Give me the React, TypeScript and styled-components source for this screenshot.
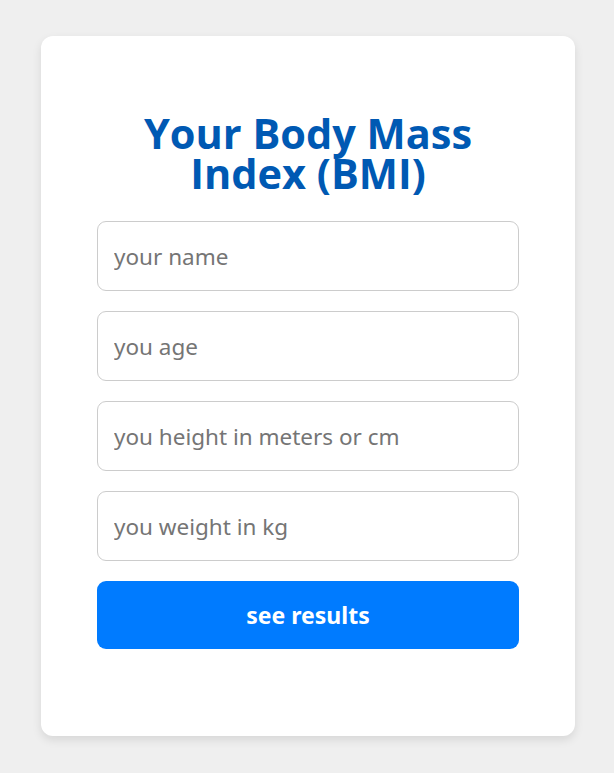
import React from "react";
import styled, { createGlobalStyle } from "styled-components";

const Global = createGlobalStyle`
  html, body { margin: 0; padding: 0; background: #efefef; }
  body { font-family: "Open Sans", "Noto Sans", sans-serif; }
  * { box-sizing: border-box; }
`;

const Page = styled.div`
  min-height: 773px;
  display: flex;
  justify-content: center;
  padding: 36px 0 0 2px;
`;

const Card = styled.div`
  width: 534px;
  height: 700px;
  background: #fff;
  border-radius: 12px;
  box-shadow: 0 4px 10px rgba(0, 0, 0, 0.1);
  padding: 77px 56px 0;
  display: flex;
  flex-direction: column;
`;

const Title = styled.h1`
  margin: 0 0 28px;
  text-align: center;
  color: #0059b3;
  font-family: "Open Sans", sans-serif;
  font-weight: 700;
  font-size: 41.5px;
  line-height: 40px;
`;

const Form = styled.form`
  display: flex;
  flex-direction: column;
  gap: 20px;
`;

const Input = styled.input`
  width: 100%;
  height: 70px;
  border: 1px solid #cccccc;
  border-radius: 9px;
  padding: 0 16px;
  font-family: "Noto Sans", sans-serif;
  font-size: 22.5px;
  color: #333;
  background: #fff;
  outline: none;
  &::placeholder { color: #757575; }
`;

const Button = styled.button`
  height: 68px;
  flex-shrink: 0;
  border: none;
  border-radius: 9px;
  background: #007bff;
  color: #fff;
  font-family: "Noto Sans", sans-serif;
  font-weight: 700;
  font-size: 23px;
  cursor: pointer;
`;

export default function App() {
  return (
    <>
      <Global />
      <Page>
        <Card>
          <Title>Your Body Mass Index (BMI)</Title>
          <Form onSubmit={(e) => e.preventDefault()}>
            <Input placeholder="your name" />
            <Input placeholder="you age" />
            <Input placeholder="you height in meters or cm" />
            <Input placeholder="you weight in kg" />
            <Button type="submit">see results</Button>
          </Form>
        </Card>
      </Page>
    </>
  );
}
